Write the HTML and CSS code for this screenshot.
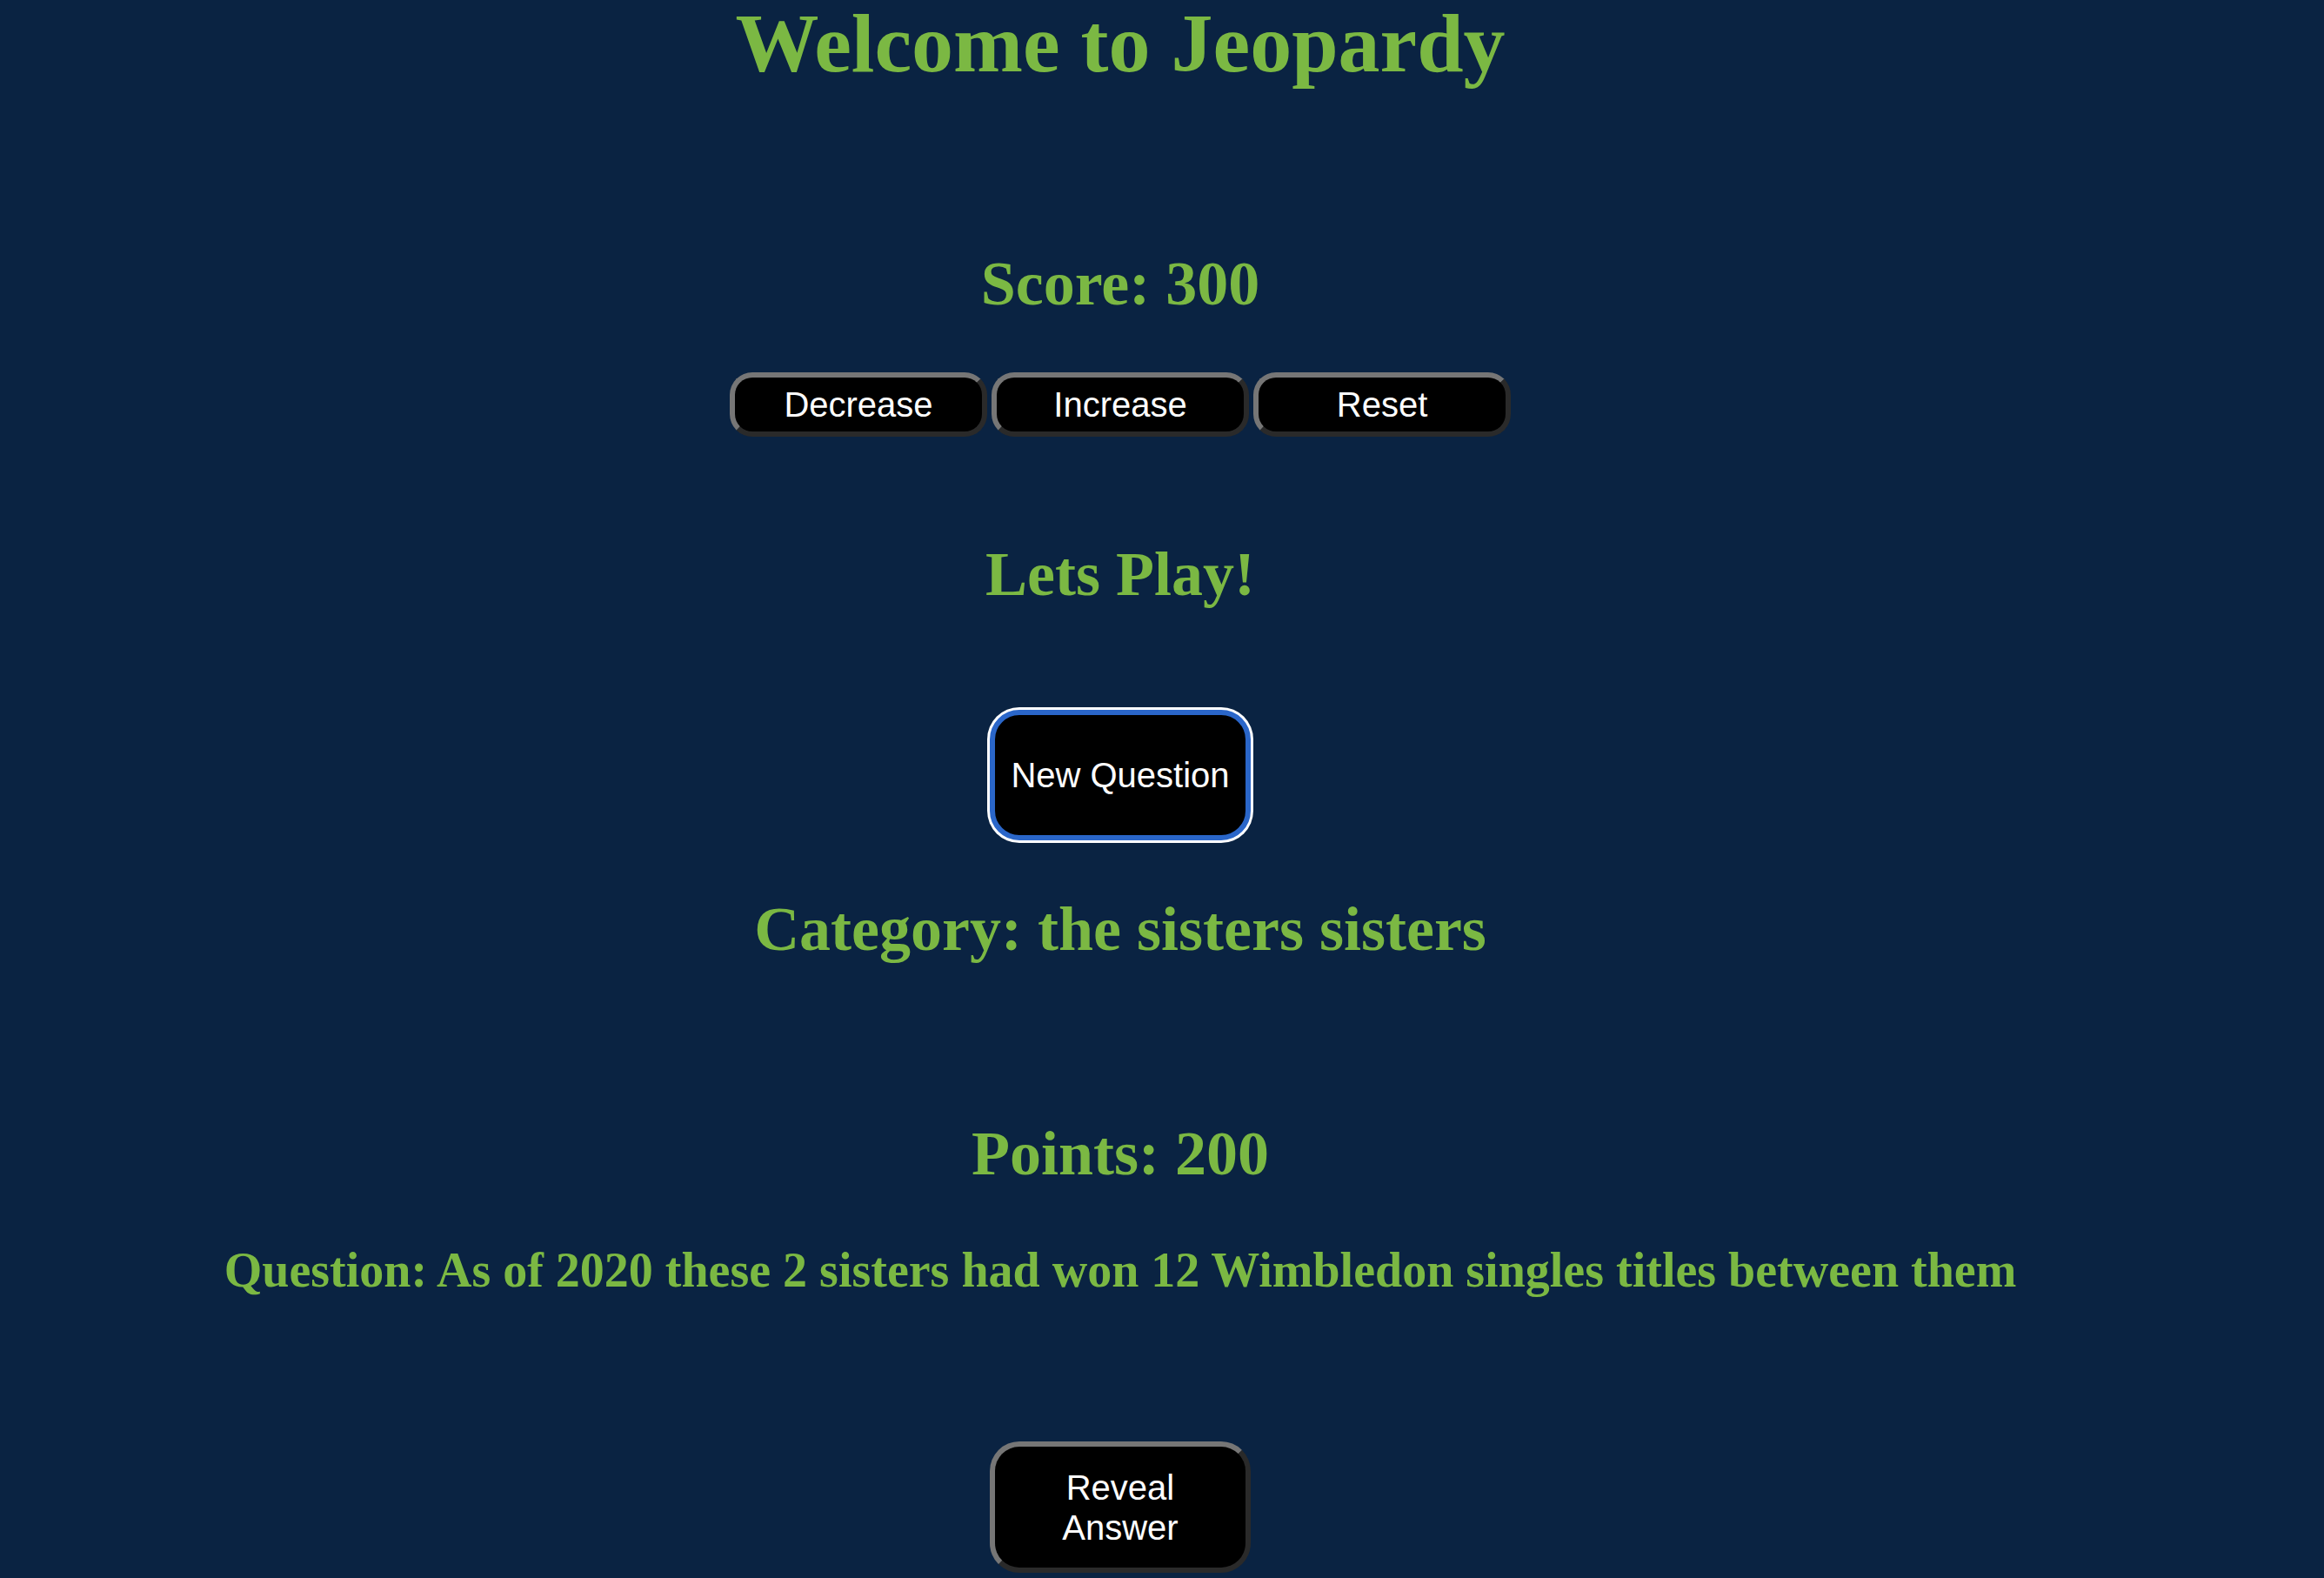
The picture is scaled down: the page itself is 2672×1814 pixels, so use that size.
FILE: index.html
```html
<!DOCTYPE html>
<html lang="en">
<head>
<meta charset="utf-8">
<title>Jeopardy</title>
<link rel="stylesheet" href="styles.css">
</head>
<body>
<main class="page">
  <h1 class="title">Welcome to Jeopardy</h1>
  <h2 class="heading score">Score: 300</h2>
  <div class="score-buttons">
    <button class="btn btn-small">Decrease</button>
    <button class="btn btn-small">Increase</button>
    <button class="btn btn-small">Reset</button>
  </div>
  <h2 class="heading lets">Lets Play!</h2>
  <button class="btn btn-big btn-focus new-q">New Question</button>
  <h2 class="heading category">Category: the sisters sisters</h2>
  <h2 class="heading points">Points: 200</h2>
  <h3 class="question">Question: As of 2020 these 2 sisters had won 12 Wimbledon singles titles between them</h3>
  <button class="btn btn-big reveal">Reveal Answer</button>
</main>
</body>
</html>
```

FILE: styles.css
```css
html, body {
  margin: 0;
  padding: 0;
  background: #0a2342;
  height: 1814px;
  overflow: hidden;
}

.page {
  margin: 0 120px 0 24px;
  display: flex;
  flex-direction: column;
  align-items: center;
  text-align: center;
  font-family: "Liberation Serif", "Times New Roman", serif;
  color: #7bb843;
}

.title {
  margin: 0;
  font-size: 96px;
  line-height: 100px;
  font-weight: bold;
}

.heading {
  margin: 0;
  font-size: 72px;
  line-height: 83px;
  font-weight: bold;
}

.score { margin-top: 185px; }
.lets { margin-top: 117px; }
.category { margin-top: 61px; }
.points { margin-top: 175px; }

.question {
  margin: 60px 0 0;
  font-size: 56px;
  line-height: 64px;
  font-weight: bold;
}

.score-buttons {
  margin-top: 60px;
  display: flex;
  gap: 5px;
}

.btn {
  background: #000;
  color: #fff;
  font-family: "Liberation Sans", Arial, sans-serif;
  font-size: 40px;
  line-height: 46px;
  padding: 3px 18px;
  border-style: solid;
  border-width: 6px;
  border-color: #767676 #2a2a2a #2a2a2a #767676;
  border-radius: 30px;
  cursor: pointer;
}

.btn-small {
  width: 296px;
  height: 74px;
  border-radius: 26px;
}

.btn-big {
  width: 300px;
  height: 150px;
  border-radius: 34px;
}

.btn-focus {
  border-color: #2a66c9;
  box-shadow: 0 0 0 3px #ffffff;
  white-space: nowrap;
  padding: 3px 10px;
}

.new-q {
  margin-top: 114px;
  height: 150px;
}

.reveal {
  margin-top: 165px;
  height: 151px;
}
```
